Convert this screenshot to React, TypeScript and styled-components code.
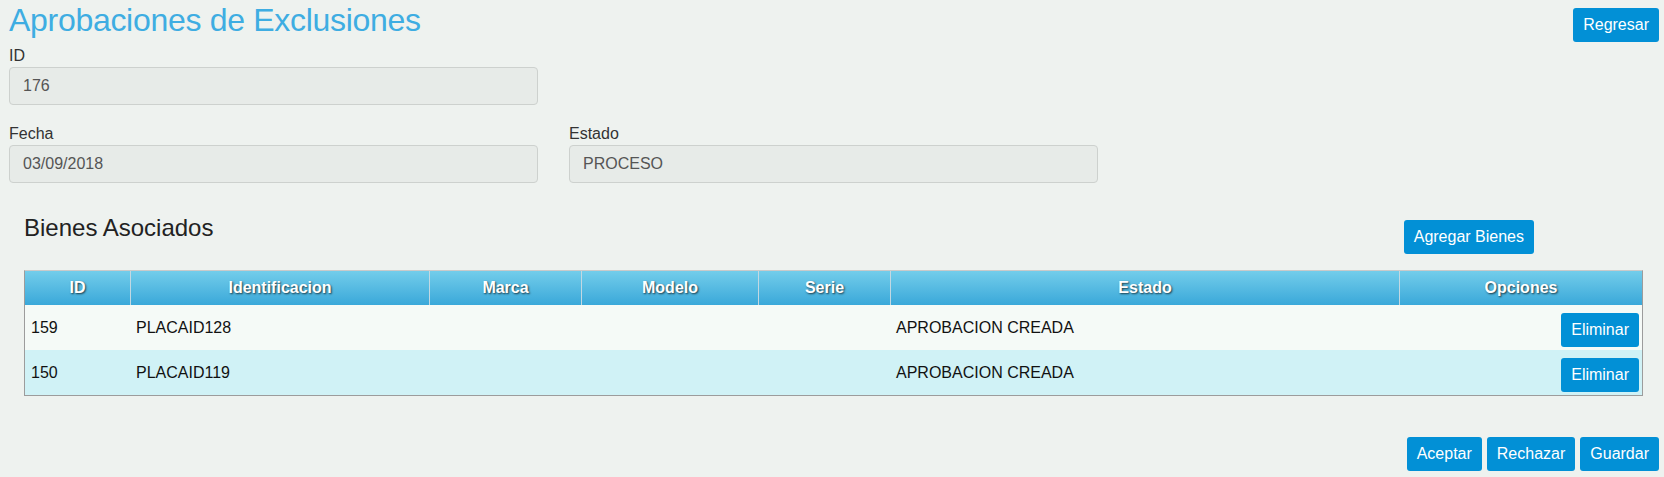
import React from "react";
import styled, { createGlobalStyle } from "styled-components";

const GlobalStyle = createGlobalStyle`
  * { box-sizing: border-box; }
  html, body {
    margin: 0;
    padding: 0;
    background: #eef2ef;
    font-family: "Liberation Sans", Arial, sans-serif;
    color: #333;
  }
`;

const Page = styled.div`
  padding: 0 5px 0 9px;
  width: 1664px;
`;

const TopBar = styled.div`
  display: flex;
  justify-content: space-between;
  align-items: flex-start;
  height: 42px;
`;

const PageTitle = styled.h1`
  margin: 0;
  font-size: 32px;
  line-height: 40px;
  font-weight: normal;
  letter-spacing: -0.3px;
  color: #3eade2;
`;

const Button = styled.button<{ $top?: number }>`
  height: 34px;
  padding: 0 10px;
  margin: ${(p) => p.$top ?? 0}px 0 0 0;
  border: none;
  border-radius: 3px;
  background: #0290d6;
  color: #fff;
  font-family: "Liberation Sans", Arial, sans-serif;
  font-size: 16px;
  line-height: 34px;
  cursor: pointer;
  white-space: nowrap;
`;

const FieldRow = styled.div<{ $top: number }>`
  display: grid;
  grid-template-columns: 529px 529px;
  column-gap: 31px;
  margin-top: ${(p) => p.$top}px;
`;

const Field = styled.div`
  display: flex;
  flex-direction: column;
`;

const Label = styled.label`
  font-size: 16px;
  line-height: 20px;
  color: #333;
  margin-bottom: 1px;
`;

const ReadOnlyInput = styled.input`
  height: 38px;
  width: 100%;
  border: 1px solid #cdd1ce;
  border-radius: 4px;
  background: #e7ebe8;
  padding: 0 13px;
  font-family: "Liberation Sans", Arial, sans-serif;
  font-size: 16px;
  color: #555;
  outline: none;
`;

const Section = styled.section`
  margin-top: 28px;
  padding: 0 16px 0 15px;
`;

const SectionHeader = styled.div`
  display: flex;
  justify-content: space-between;
  align-items: flex-start;
  padding-right: 109px;
`;

const SectionTitle = styled.h2`
  margin: 0;
  font-size: 24px;
  line-height: 34px;
  font-weight: normal;
  color: #222;
`;

const cols = "105px 299px 152px 177px 132px 509px 1fr";

const Table = styled.div`
  margin-top: 16px;
  border: 1px solid #9c9c9c;
  border-top-color: #cacaca;
`;

const HeadRow = styled.div`
  display: grid;
  grid-template-columns: ${cols};
  height: 34px;
  background: linear-gradient(#73cdea, #3aa8d9);
`;

const HeadCell = styled.div<{ $first?: boolean }>`
  display: flex;
  align-items: center;
  justify-content: center;
  border-left: ${(p) => (p.$first ? "none" : "1px solid #c2d8e2")};
  color: #fff;
  font-weight: bold;
  font-size: 16px;
  text-shadow: 1px 1px 2px rgba(0, 0, 0, 0.7);
`;

const BodyRow = styled.div<{ $alt?: boolean }>`
  display: grid;
  grid-template-columns: ${cols};
  height: 45px;
  background: ${(p) => (p.$alt ? "#d0f2f6" : "#f5faf7")};
`;

const Cell = styled.div`
  display: flex;
  align-items: center;
  padding-left: 6px;
  font-size: 16px;
  color: #111;
`;

const OptionsCell = styled.div`
  display: flex;
  justify-content: flex-end;
  align-items: flex-start;
  padding: 8px 3px 0 0;
`;

const Footer = styled.div`
  display: flex;
  justify-content: flex-end;
  gap: 5px;
  margin-top: 41px;
`;

const headers = ["ID", "Identificacion", "Marca", "Modelo", "Serie", "Estado", "Opciones"];

const rows = [
  { id: "159", ident: "PLACAID128", marca: "", modelo: "", serie: "", estado: "APROBACION CREADA" },
  { id: "150", ident: "PLACAID119", marca: "", modelo: "", serie: "", estado: "APROBACION CREADA" },
];

export default function App() {
  return (
    <>
      <GlobalStyle />
      <Page>
        <TopBar>
          <PageTitle>Aprobaciones de Exclusiones</PageTitle>
          <Button $top={8}>Regresar</Button>
        </TopBar>

        <FieldRow $top={4}>
          <Field>
            <Label>ID</Label>
            <ReadOnlyInput readOnly defaultValue="176" />
          </Field>
        </FieldRow>

        <FieldRow $top={19}>
          <Field>
            <Label>Fecha</Label>
            <ReadOnlyInput readOnly defaultValue="03/09/2018" />
          </Field>
          <Field>
            <Label>Estado</Label>
            <ReadOnlyInput readOnly defaultValue="PROCESO" />
          </Field>
        </FieldRow>

        <Section>
          <SectionHeader>
            <SectionTitle>Bienes Asociados</SectionTitle>
            <Button $top={9}>Agregar Bienes</Button>
          </SectionHeader>

          <Table>
            <HeadRow>
              {headers.map((h, i) => (
                <HeadCell key={h} $first={i === 0}>
                  {h}
                </HeadCell>
              ))}
            </HeadRow>
            {rows.map((r, i) => (
              <BodyRow key={r.id} $alt={i % 2 === 1}>
                <Cell>{r.id}</Cell>
                <Cell>{r.ident}</Cell>
                <Cell>{r.marca}</Cell>
                <Cell>{r.modelo}</Cell>
                <Cell>{r.serie}</Cell>
                <Cell>{r.estado}</Cell>
                <OptionsCell>
                  <Button>Eliminar</Button>
                </OptionsCell>
              </BodyRow>
            ))}
          </Table>
        </Section>

        <Footer>
          <Button>Aceptar</Button>
          <Button>Rechazar</Button>
          <Button>Guardar</Button>
        </Footer>
      </Page>
    </>
  );
}
